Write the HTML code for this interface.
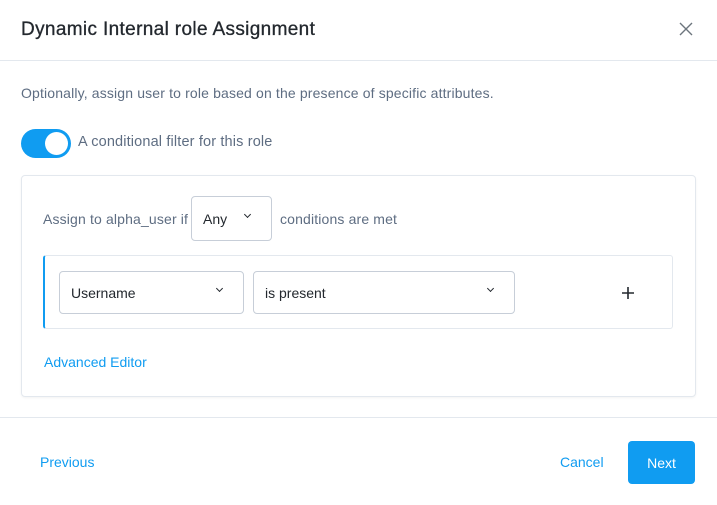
<!DOCTYPE html>
<html><head><style>
*{box-sizing:border-box;margin:0;padding:0}
body{width:717px;height:505px;background:#fff;font-family:"Liberation Sans",sans-serif;position:relative;overflow:hidden;color:#23282e}
.a{position:absolute}
.sel{position:absolute;border:1px solid #c7ced8;border-radius:4px;background:#fff;font-size:14px;color:#23282e;padding-left:11px;display:flex;align-items:center}
.chev{position:absolute;width:5px;height:5px;border-right:1.5px solid #23282e;border-bottom:1.5px solid #23282e;transform:rotate(45deg)}
.muted{color:#5e6d82;font-size:14px;letter-spacing:0.15px}
</style></head><body>
<div class="a" style="left:21px;top:19px;font-size:19px;color:#23282e;letter-spacing:0.35px;-webkit-text-stroke:0.3px #23282e">Dynamic Internal role Assignment</div>
<svg class="a" style="left:679px;top:22px" width="14" height="14" viewBox="0 0 14 14"><path d="M1 1L13 13M13 1L1 13" stroke="#6c757d" stroke-width="1.4"/></svg>
<div class="a" style="left:0;top:60px;width:717px;height:1px;background:#e3e8ee"></div>
<div class="a muted" style="left:21px;top:85px">Optionally, assign user to role based on the presence of specific attributes.</div>
<div class="a" style="left:21px;top:129px;width:50px;height:29px;border-radius:15px;background:#109cf1"></div>
<div class="a" style="left:45px;top:132px;width:23px;height:23px;border-radius:50%;background:#fff"></div>
<div class="a muted" style="left:78px;top:134px;font-size:14.5px">A conditional filter for this role</div>
<div class="a" style="left:21px;top:175px;width:675px;height:222px;border:1px solid #e3e8ee;border-radius:4px;box-shadow:0 1px 2px rgba(0,0,0,.05)"></div>
<div class="a muted" style="left:43px;top:211px">Assign to alpha_user if</div>
<div class="sel" style="left:191px;top:196px;width:81px;height:45px">Any</div>
<div class="chev" style="left:245px;top:212px"></div>
<div class="a muted" style="left:280px;top:211px">conditions are met</div>
<div class="a" style="left:43px;top:255px;width:630px;height:74px;border:1px solid #e3e8ee;border-left:2px solid #109cf1;border-radius:3px"></div>
<div class="sel" style="left:59px;top:271px;width:185px;height:43px">Username</div>
<div class="chev" style="left:217px;top:286px"></div>
<div class="sel" style="left:253px;top:271px;width:262px;height:43px">is present</div>
<div class="chev" style="left:488px;top:286px"></div>
<svg class="a" style="left:621px;top:286px" width="14" height="14"><path d="M7 1V13M1 7H13" stroke="#23282e" stroke-width="1.6"/></svg>
<div class="a" style="left:44px;top:354px;font-size:14px;color:#109cf1">Advanced Editor</div>
<div class="a" style="left:0;top:417px;width:717px;height:1px;background:#e3e8ee"></div>
<div class="a" style="left:40px;top:454px;font-size:14px;color:#109cf1">Previous</div>
<div class="a" style="left:560px;top:454px;font-size:14px;color:#109cf1">Cancel</div>
<div class="a" style="left:628px;top:441px;width:67px;height:43px;background:#109cf1;border-radius:4px;color:#fff;font-size:14px;display:flex;align-items:center;justify-content:center">Next</div>
</body></html>
